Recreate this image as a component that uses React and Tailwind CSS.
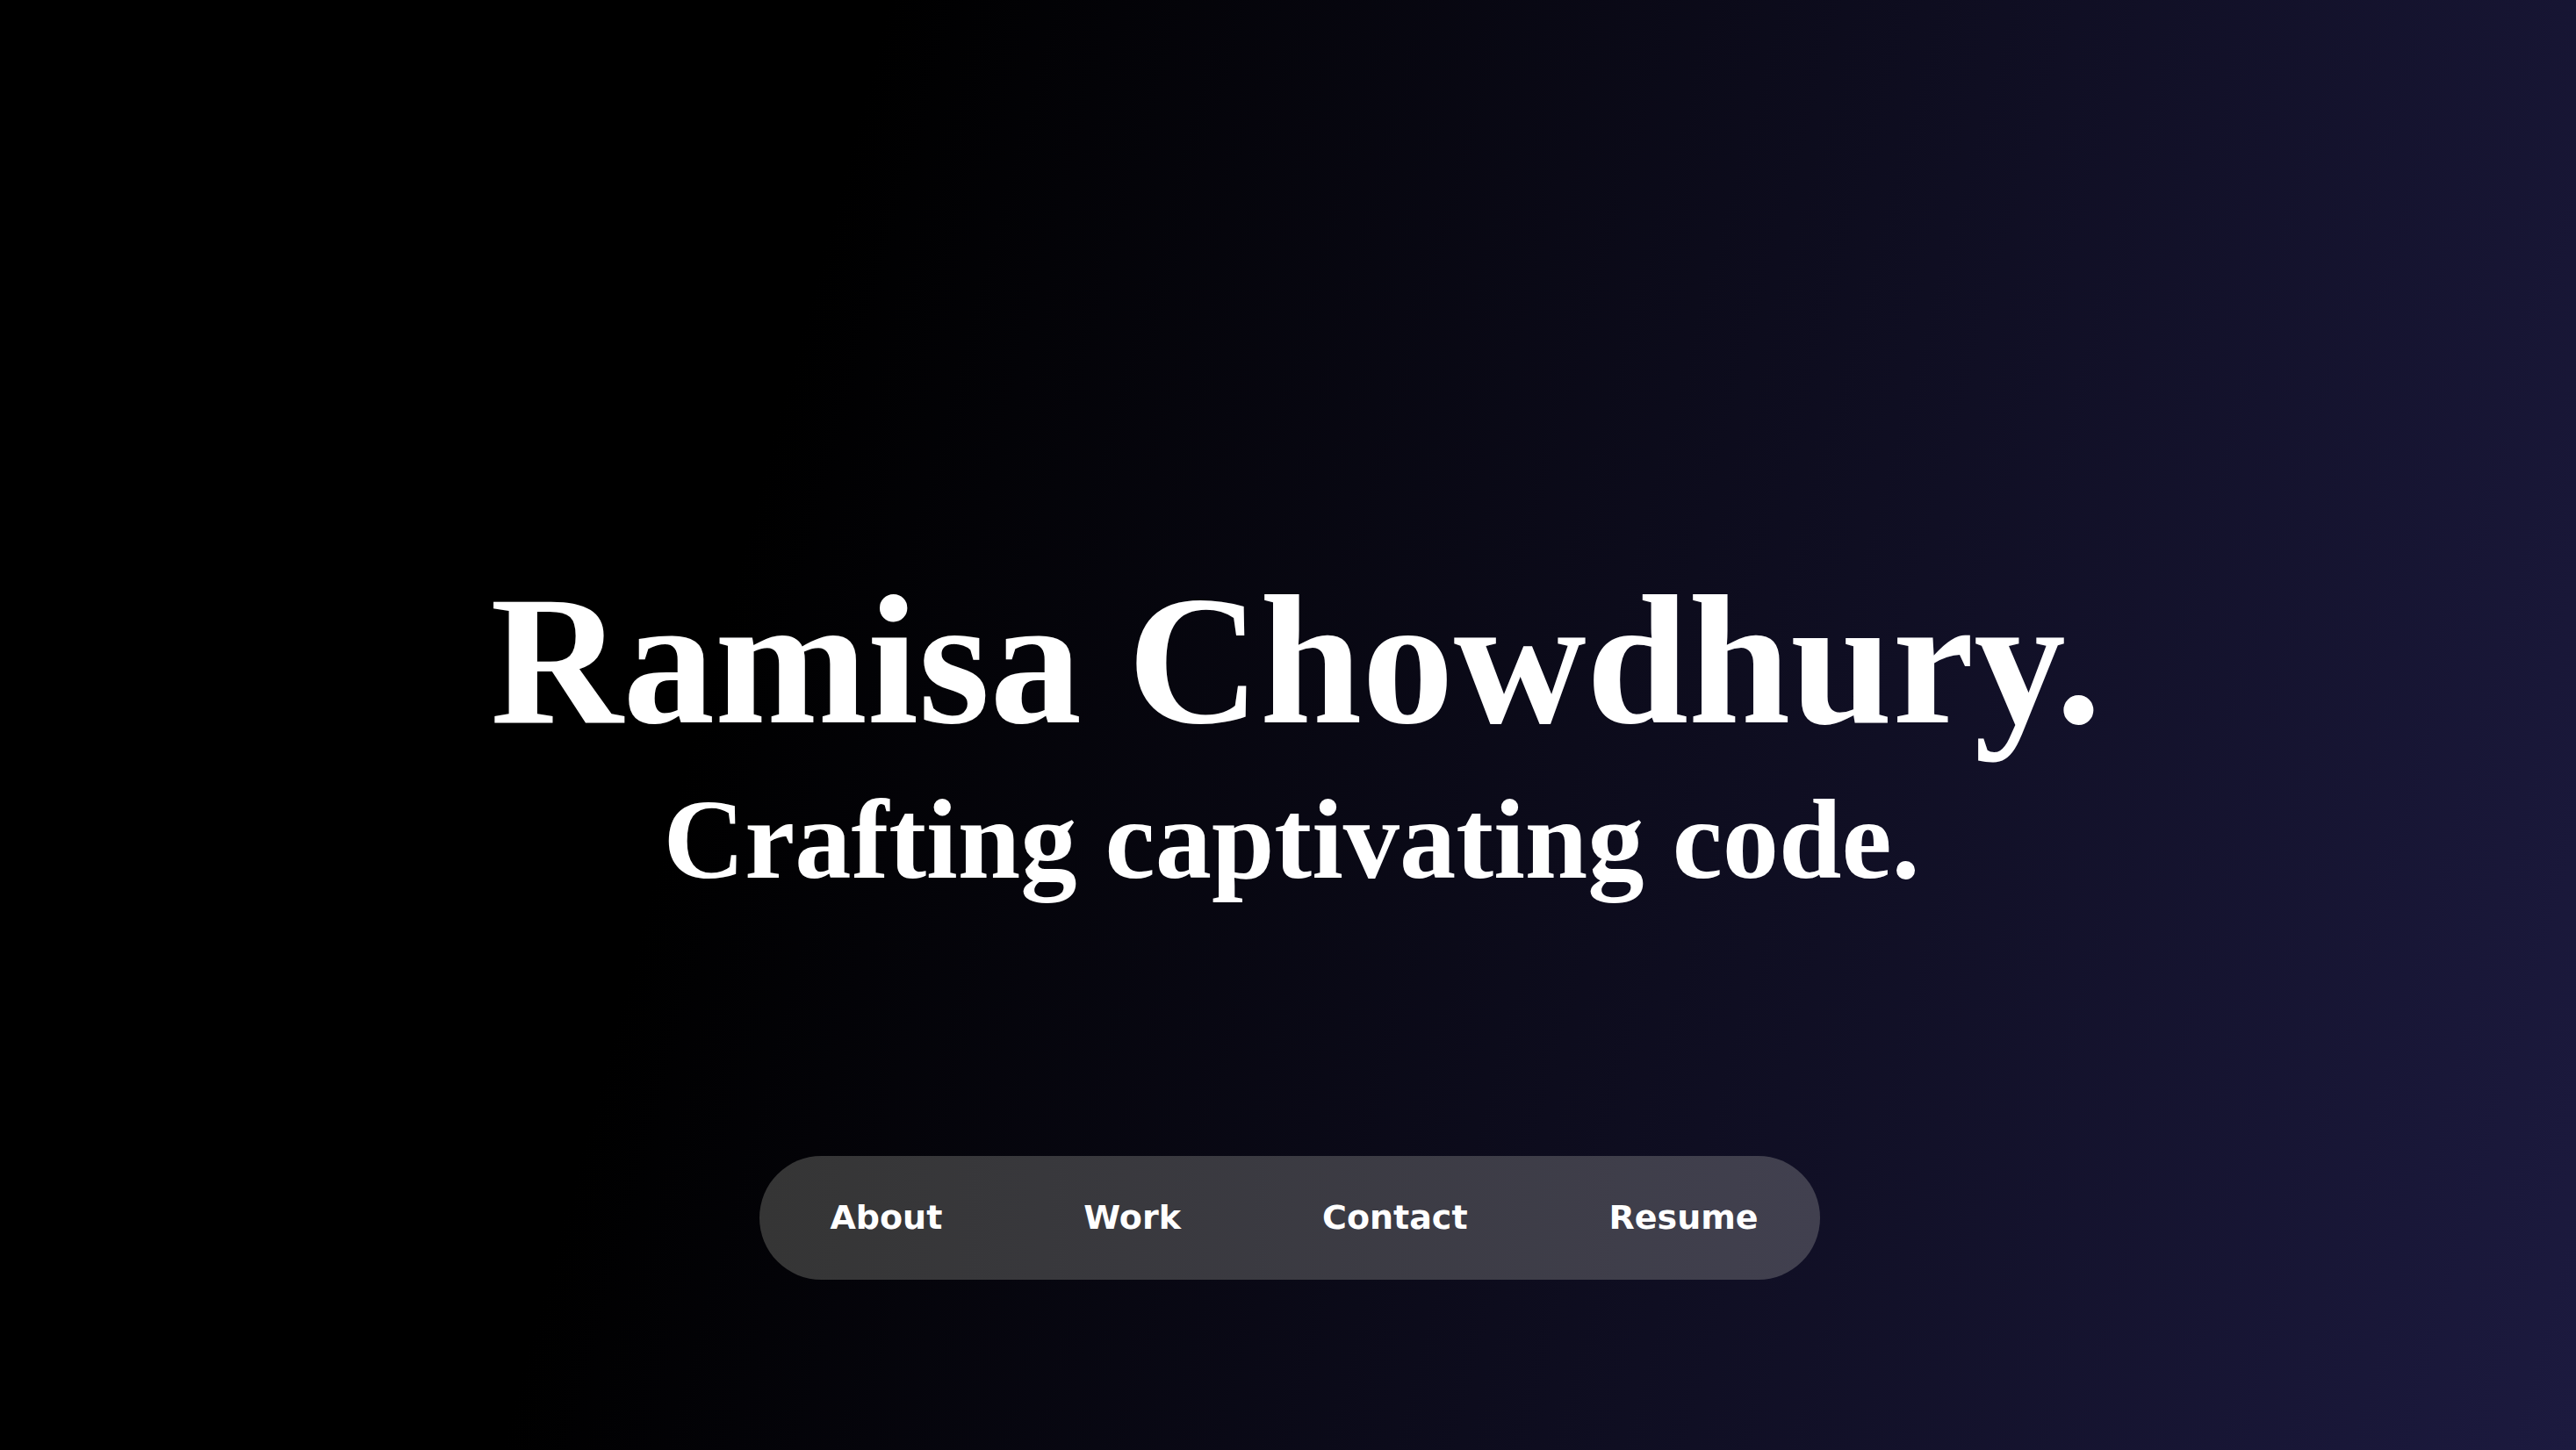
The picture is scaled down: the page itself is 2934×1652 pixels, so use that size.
const LINKS = ['About', 'Work', 'Contact', 'Resume']

export default function App() {
  return (
    <div className="flex min-h-screen w-full flex-col items-center bg-linear-[105deg] from-black from-30% to-[#1c1a3f] pt-[648px] text-white">
      {/* Hero */}
      <h1 className="ml-[18px] font-['Liberation_Serif','Times_New_Roman',serif] text-[209px] font-bold leading-none">
        Ramisa Chowdhury.
      </h1>
      <h2 className="ml-[8px] mt-[36px] font-['Liberation_Serif','Times_New_Roman',serif] text-[128.5px] font-bold leading-none">
        Crafting captivating code.
      </h2>

      {/* Nav pill */}
      <nav className="ml-[4px] mt-[295px] flex h-[141px] items-center gap-[161px] rounded-full bg-gradient-to-r from-[#353535] to-[#41404f] pl-[80px] pr-[70px]">
        {LINKS.map((l) => (
          <a
            key={l}
            href="#"
            className="font-['DejaVu_Sans','Verdana',sans-serif] text-[38px] font-bold text-white"
          >
            {l}
          </a>
        ))}
      </nav>
    </div>
  )
}
